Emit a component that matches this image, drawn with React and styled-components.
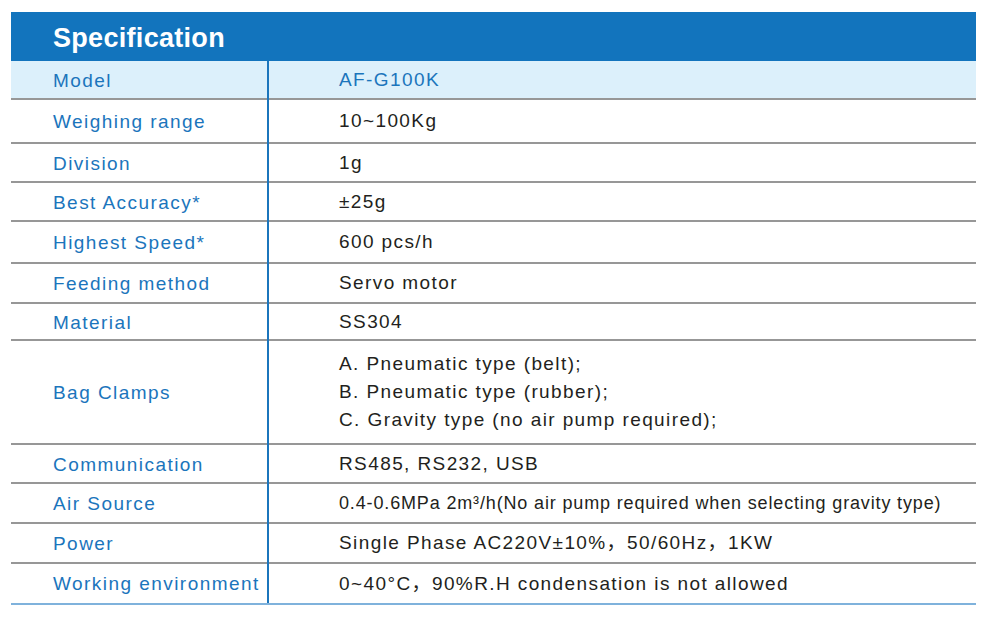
import React from "react";
import styled, { createGlobalStyle } from "styled-components";

const GlobalStyle = createGlobalStyle`
	body {
		margin: 0;
		background: #fff;
		font-family: "Liberation Sans", "Noto Sans CJK SC", Arial, sans-serif;
	}
`;

// styles
const Table = styled.div`
	margin: 12px 0 0 11px;
	width: 965px;
	display: flex;
	flex-direction: column;
	border-bottom: 2px solid #7fb2dc;
`;

const Header = styled.div`
	height: 49px;
	box-sizing: border-box;
	background: #1274bd;
	display: flex;
	align-items: center;
	padding: 4px 0 0 42px;
	color: #fff;
	font-size: 27px;
	font-weight: 700;
	letter-spacing: 0.3px;
`;

const Row = styled.div`
	display: grid;
	grid-template-columns: 258px 1fr;
	height: ${props => props.h}px;
	background: ${props => props.highlight ? '#dcf0fb' : '#fff'};
	border-bottom: ${props => props.last ? 'none' : '2px solid #979797'};
	box-sizing: border-box;
`;

const Label = styled.div`
	display: flex;
	align-items: center;
	padding-left: 42px;
	border-right: 2px solid #1b75bc;
	margin-bottom: ${props => props.last ? '0' : '-2px'};
	color: #1b75bc;
	font-size: 19px;
	letter-spacing: 1.45px;
`;

const Value = styled.div`
	display: flex;
	flex-direction: column;
	justify-content: center;
	padding-left: 70px;
	color: ${props => props.blue ? '#1b75bc' : '#231f20'};
	font-size: ${props => props.small ? '18px' : '19px'};
	letter-spacing: ${props => props.small ? '0.85px' : '1.4px'};
	line-height: 28px;
`;

const rows = [
	{ label: 'Model', value: ['AF-G100K'], h: 39, highlight: true, blue: true },
	{ label: 'Weighing range', value: ['10~100Kg'], h: 44 },
	{ label: 'Division', value: ['1g'], h: 39 },
	{ label: 'Best Accuracy*', value: ['±25g'], h: 39 },
	{ label: 'Highest Speed*', value: ['600 pcs/h'], h: 42 },
	{ label: 'Feeding method', value: ['Servo motor'], h: 40 },
	{ label: 'Material', value: ['SS304'], h: 37 },
	{
		label: 'Bag Clamps',
		value: [
			'A. Pneumatic type (belt);',
			'B. Pneumatic type (rubber);',
			'C. Gravity type (no air pump required);',
		],
		h: 104,
	},
	{ label: 'Communication', value: ['RS485, RS232, USB'], h: 39 },
	{ label: 'Air Source', value: ['0.4-0.6MPa 2m³/h(No air pump required when selecting gravity type)'], h: 40, small: true },
	{ label: 'Power', value: ['Single Phase AC220V±10%，50/60Hz，1KW'], h: 40 },
	{ label: 'Working environment', value: ['0~40°C，90%R.H condensation is not allowed'], h: 39 },
];

const App = () => {
	return (
		<>
			<GlobalStyle />
			<Table>
				<Header>Specification</Header>
				{rows.map((row, i) => {
					const last = i === rows.length - 1;
					return (
						<Row key={row.label} h={row.h} highlight={row.highlight} last={last}>
							<Label last={last}>{row.label}</Label>
							<Value blue={row.blue} small={row.small}>
								{row.value.map(line => <span key={line}>{line}</span>)}
							</Value>
						</Row>
					);
				})}
			</Table>
		</>
	);
};

export default App;
